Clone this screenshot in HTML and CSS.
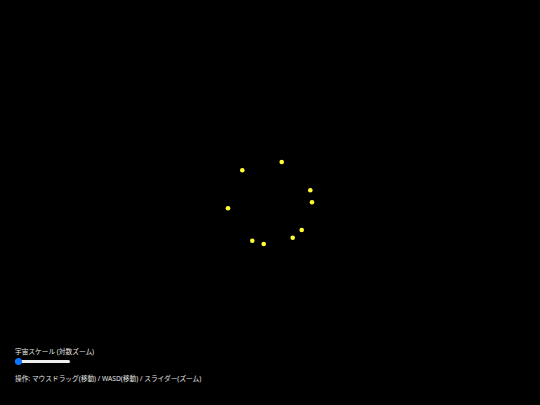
FILE: index.html
```html
<!DOCTYPE html>
<html lang="ja">
<head>
<meta charset="utf-8">
<link rel="stylesheet" href="styles.css">
</head>
<body>
<div class="app">
  <svg class="space" width="540" height="405" viewBox="0 0 540 405">
    <g fill="#ffff33">
      <circle cx="281.7" cy="162" r="2.3"/>
      <circle cx="242.3" cy="170.3" r="2.3"/>
      <circle cx="310.3" cy="190.3" r="2.3"/>
      <circle cx="312" cy="202.3" r="2.3"/>
      <circle cx="228" cy="208.3" r="2.3"/>
      <circle cx="301.7" cy="230" r="2.3"/>
      <circle cx="292.7" cy="237.7" r="2.3"/>
      <circle cx="252.3" cy="240.7" r="2.3"/>
      <circle cx="263.7" cy="244" r="2.3"/>
    </g>
  </svg>
  <div class="panel">
    <div class="label">宇宙スケール (対数ズーム)</div>
    <div class="slider"><span class="thumb"></span></div>
    <div class="help">操作: マウスドラッグ(移動) / WASD(移動) / スライダー(ズーム)</div>
  </div>
</div>
</body>
</html>
```
FILE: styles.css
```css
html, body {
  margin: 0;
  padding: 0;
  background: #000;
  width: 540px;
  height: 405px;
  overflow: hidden;
}
.app {
  position: relative;
  width: 540px;
  height: 405px;
  display: flex;
  flex-direction: column;
  justify-content: flex-end;
}
.space {
  position: absolute;
  left: 0;
  top: 0;
}
.panel {
  position: relative;
  padding: 0 0 21px 15px;
  color: #e6e6e6;
  font-family: "Noto Sans", "Noto Sans CJK JP", sans-serif;
  font-size: 6.7px;
  line-height: 10px;
}
.label {
  height: 10px;
}
.slider {
  position: relative;
  width: 55px;
  height: 3px;
  margin: 3px 0 11px 0;
  background: #efefef;
  border-radius: 2px;
}
.thumb {
  position: absolute;
  left: 0;
  top: -2px;
  width: 7px;
  height: 7px;
  border-radius: 50%;
  background: #0a75ff;
}
.help {
  height: 10px;
}
```
